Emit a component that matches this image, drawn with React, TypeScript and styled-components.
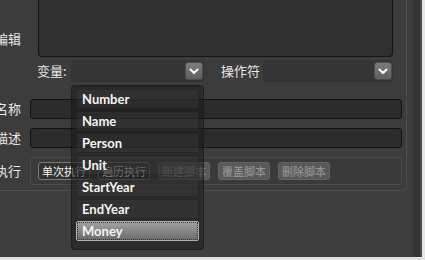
import React from "react";
import styled, { createGlobalStyle, css } from "styled-components";

const Global = createGlobalStyle`
  html, body { margin: 0; padding: 0; background: #3e3e3e; }
  body { width: 425px; height: 260px; overflow: hidden; }
  * { box-sizing: border-box; }
`;

const Page = styled.div`
  width: 425px;
  height: 260px;
  display: flex;
  flex-direction: column;
  font-family: "Noto Sans CJK SC", "Noto Sans", sans-serif;
`;

const Frame = styled.div`
  display: flex;
  height: 257px;
`;

const Main = styled.div`
  flex: 1;
  background: #3e3e3e;
`;

const Panel = styled.div`
  width: 407px;
  height: 191px;
  display: flex;
  flex-direction: column;
  background: #3c3c3c;
  border-right: 1px solid #4e4e4e;
  border-bottom: 1px solid #4e4e4e;
  border-bottom-right-radius: 5px;
`;

const ScrollTrack = styled.div`
  width: 7px;
  margin-left: 6px;
  background: #353535;
`;

const Edge = styled.div`
  width: 2px;
  background: #4a4a4a;
`;

const Paper = styled.div`
  width: 3px;
  background: #e6e6e6;
`;

const BottomEdge = styled.div`
  height: 3px;
  background: #e2e2e2;
`;

const Label = styled.div<{ $pb?: number }>`
  width: 21px;
  flex: none;
  display: flex;
  justify-content: flex-end;
  overflow: hidden;
  white-space: nowrap;
  color: #e6e6e6;
  font-size: 13px;
  line-height: 16px;
  padding-bottom: ${(p) => p.$pb ?? 0}px;
`;

const TextRow = styled.div`
  height: 57px;
  display: flex;
  align-items: flex-end;
`;

const TextArea = styled.div`
  margin-left: 17px;
  width: 355px;
  height: 57px;
  background: #2f2f2f;
  border: 1px solid #151515;
  border-top: none;
  border-radius: 0 0 4px 4px;
`;

const ComboRow = styled.div`
  margin-top: 3px;
  height: 22px;
  display: flex;
  align-items: center;
  padding-left: 37px;
`;

const ComboLabel = styled.span<{ $w: number; $ml?: number; $mr: number }>`
  flex: none;
  width: ${(p) => p.$w}px;
  color: #e6e6e6;
  font-size: 13px;
  line-height: 16px;
  margin-left: ${(p) => p.$ml ?? 0}px;
  margin-right: ${(p) => p.$mr}px;
  white-space: nowrap;
`;

const Combo = styled.div<{ $w: number }>`
  position: relative;
  flex: none;
  width: ${(p) => p.$w}px;
  height: 22px;
  background: #353535;
  border-radius: 3px;
  display: flex;
  justify-content: flex-end;
  align-items: center;
  padding-right: 1px;
`;

const DropButton = styled.div`
  width: 18px;
  height: 18px;
  border-radius: 3px;
  background: linear-gradient(#7c7c7c, #5f5f5f);
  border: 1px solid #4c4c4c;
  display: flex;
  align-items: center;
  justify-content: center;
`;

const FieldRow = styled.div<{ $mt: number; $h: number }>`
  margin-top: ${(p) => p.$mt}px;
  height: ${(p) => p.$h}px;
  display: flex;
  align-items: center;
`;

const Input = styled.div`
  margin-left: 9px;
  width: 372px;
  height: 20px;
  background: #2c2c2c;
  border: 1px solid #121212;
  border-radius: 3px;
`;

const Group = styled.div`
  margin-left: 9px;
  width: 372px;
  height: 28px;
  border: 1px solid #4b4b4b;
  background: #3a3a3a;
  border-radius: 3px;
  padding: 4px 7px;
  display: flex;
  gap: 8px;
`;

const Button = styled.div<{ $disabled?: boolean }>`
  width: 52px;
  height: 18px;
  border-radius: 3px;
  font-size: 11px;
  line-height: 16px;
  text-align: center;
  white-space: nowrap;
  ${(p) =>
    p.$disabled
      ? css`
          background: #595959;
          border: 1px solid #646464;
          color: #9c9c9c;
        `
      : css`
          background: #323232;
          border: 1px solid #7a7a7a;
          color: #f2f2f2;
        `}
`;

const Popup = styled.div`
  position: absolute;
  top: 25px;
  left: 0;
  width: 133px;
  z-index: 10;
  background: rgba(28, 28, 28, 0.55);
  border: 1px solid rgba(24, 24, 24, 0.6);
  border-radius: 4px;
  padding: 3px 4px 8px;
  display: flex;
  flex-direction: column;
  gap: 2px;
`;

const Item = styled.div<{ $selected?: boolean }>`
  height: 20px;
  padding-left: 5px;
  font-family: Lato, "Noto Sans", sans-serif;
  font-weight: 700;
  font-size: 13px;
  line-height: 18px;
  color: #f4f4f4;
  border-radius: 2px;
  ${(p) =>
    p.$selected
      ? css`
          background: linear-gradient(#a2a2a2, #6a6a6a);
          border: 1px solid #b0b0b0;
          outline: 1px dotted #333;
          outline-offset: -2px;
        `
      : css`
          background: rgba(64, 64, 64, 0.35);
          border: 1px solid rgba(22, 22, 22, 0.35);
        `}
`;

const Chevron = () => (
  <svg width="10" height="7" viewBox="0 0 10 7">
    <polyline points="1.5,1.5 5,5 8.5,1.5" fill="none" stroke="#fff" strokeWidth="2" strokeLinecap="round" strokeLinejoin="round" />
  </svg>
);

const variables = ["Number", "Name", "Person", "Unit", "StartYear", "EndYear", "Money"];

export default function App() {
  return (
    <Page>
      <Global />
      <Frame>
        <Main>
          <Panel>
            <TextRow>
              <Label $pb={10}>编辑</Label>
              <TextArea />
            </TextRow>
            <ComboRow>
              <ComboLabel $w={28} $mr={6}>变量:</ComboLabel>
              <Combo $w={133}>
                <DropButton>
                  <Chevron />
                </DropButton>
                <Popup>
                  {variables.map((v) => (
                    <Item key={v} $selected={v === "Money"}>
                      {v}
                    </Item>
                  ))}
                </Popup>
              </Combo>
              <ComboLabel $w={39} $ml={17} $mr={3}>操作符</ComboLabel>
              <Combo $w={130}>
                <DropButton>
                  <Chevron />
                </DropButton>
              </Combo>
            </ComboRow>
            <FieldRow $mt={17} $h={20}>
              <Label>名称</Label>
              <Input />
            </FieldRow>
            <FieldRow $mt={9} $h={20}>
              <Label>描述</Label>
              <Input />
            </FieldRow>
            <FieldRow $mt={9} $h={28}>
              <Label>执行</Label>
              <Group>
                <Button>单次执行</Button>
                <Button>遍历执行</Button>
                <Button $disabled>新建脚本</Button>
                <Button $disabled>覆盖脚本</Button>
                <Button $disabled>删除脚本</Button>
              </Group>
            </FieldRow>
          </Panel>
        </Main>
        <ScrollTrack />
        <Edge />
        <Paper />
      </Frame>
      <BottomEdge />
    </Page>
  );
}
